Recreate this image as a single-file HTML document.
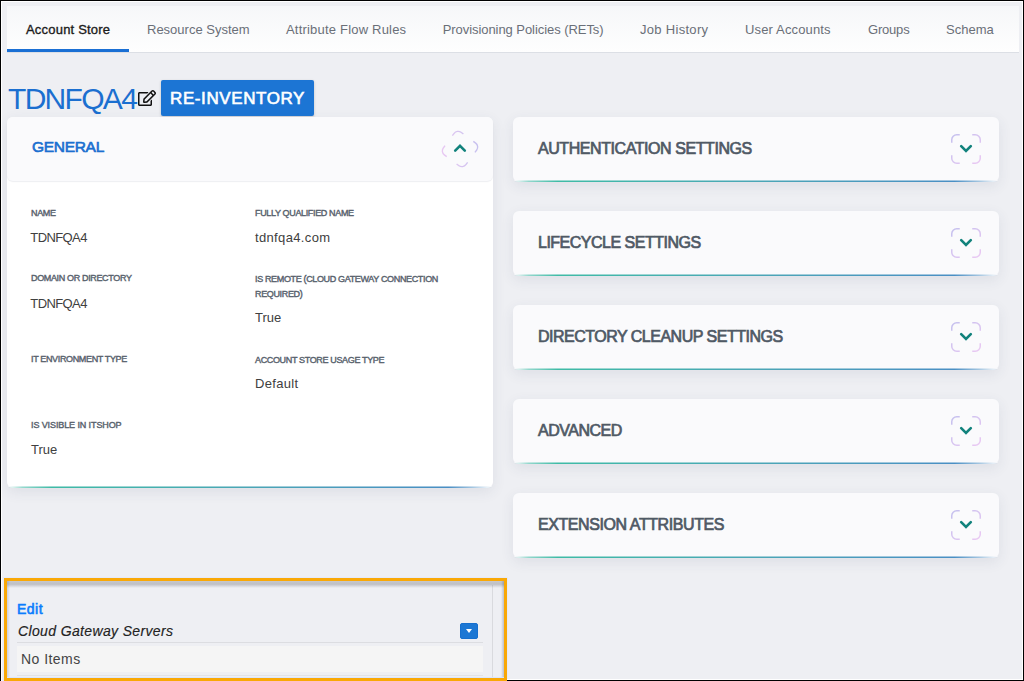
<!DOCTYPE html>
<html lang="en">
<head>
<meta charset="utf-8">
<title>Account Store - TDNFQA4</title>
<style>
*{box-sizing:border-box;margin:0;padding:0}
html,body{width:1024px;height:681px;overflow:hidden}
body{background:#eeeff3;font-family:"Liberation Sans",Arial,sans-serif;color:#333;position:relative}
.abs{position:absolute}
.t{position:absolute;white-space:nowrap;line-height:1}
/* outer screenshot frame */
#frame-l{left:0;top:0;width:1px;height:681px;background:#000}
#frame-t{left:0;top:0;width:1024px;height:1px;background:#000}
#frame-r{left:1023px;top:0;width:1px;height:681px;background:#000}
#frame-wr{left:1022px;top:1px;width:1px;height:679px;background:#fff}
#frame-wb{left:507px;top:679px;width:516px;height:1px;background:#fff}
#frame-b{left:507px;top:680px;width:517px;height:1px;background:#000}
#frame-wl{left:1px;top:1px;width:1px;height:680px;background:#fff}
#frame-wt{left:1px;top:1px;width:1022px;height:1px;background:#fff}
/* tab bar */
#tabs{left:7px;top:6px;width:1012px;height:47px;background:linear-gradient(#f6f7f9,#fefefe);border-bottom:1px solid #dcdfe5}
#tabs .tab{position:absolute;top:0;height:46px;font-size:13px;line-height:48px;color:#6a6f78;white-space:nowrap}
#tabs .tab.act{color:#1c1c1c;-webkit-text-stroke:0.35px #1c1c1c}
#tab-ul{left:7px;top:49px;width:122px;height:3px;background:#1a6fd4}
/* title */
#title{left:8px;top:84px;font-size:30px;color:#1b6fd0;letter-spacing:-1.7px}
#btn{left:161px;top:80px;width:153px;height:36px;background:#1c75d4;border-radius:2px;box-shadow:0 1px 3px rgba(0,0,0,.18)}
#btn span{left:9px;top:10px;font-size:17px;letter-spacing:0.600px;color:#fff;-webkit-text-stroke:0.6px #fff}
/* cards */
.card{position:absolute;background:#fafafc;border-radius:6px;box-shadow:0 4px 14px rgba(60,70,100,.09)}
.card .grad{position:absolute;left:1px;right:1px;bottom:0;height:2px;background:linear-gradient(90deg,rgba(63,187,166,0) 0,rgba(63,187,166,.55) 3%,#3fbba6 9%,#4ba6b6 50%,#4a8fc4 91%,rgba(74,143,196,.5) 96%,rgba(74,143,196,0) 100%)}
.card .grad:before{content:"";position:absolute;left:0;right:0;top:0;height:1px;background:rgba(250,250,252,.5)}
.card h2{position:absolute;left:25px;top:24px;font-size:16px;line-height:1;font-weight:normal;color:#4f5965;white-space:nowrap;letter-spacing:-0.5px;-webkit-text-stroke:0.7px #4f5965}
#gen h2{font-size:15.500px;letter-spacing:-0.3px;top:22px;color:#1b6fd0;-webkit-text-stroke:0.65px #1b6fd0}
#gen{background:#fff}
#gen-head{left:0;top:0;width:486px;height:63.500px;background:#fafafc;border-radius:6px;box-shadow:0 1px 1px rgba(60,70,100,.09)}
#gen-body{left:0;top:64px;width:486px;height:306px}
.lbl{position:absolute;white-space:nowrap;font-size:9px;line-height:15px;color:#58626d;-webkit-text-stroke:0.4px #58626d;letter-spacing:-0.35px}
.val{position:absolute;white-space:nowrap;font-size:13px;line-height:1;color:#404040}
.ico{position:absolute;right:18px;top:17px;width:30px;height:30px}
/* bottom highlighted box */
#hl{left:4px;top:578px;width:503px;height:103px;border:3px solid #f9a806;box-shadow:0 0 0 1px rgba(225,232,250,.75)}
#hl-sh{left:7px;top:581px;width:497px;height:7px;background:linear-gradient(rgba(40,42,50,.20) 0,rgba(40,42,50,.24) 45%,rgba(40,42,50,.10) 75%,rgba(40,42,50,0) 100%)}
#hl-shl{left:7px;top:581px;width:3px;height:97px;background:linear-gradient(90deg,rgba(80,100,150,.22),rgba(80,90,120,0))}
#hl-shr{left:501px;top:581px;width:3px;height:97px;background:linear-gradient(270deg,rgba(60,70,100,.28),rgba(60,70,100,0))}
#hl-shb{left:7px;top:677px;width:497px;height:1px;background:rgba(215,228,255,.9)}
#vline{left:492px;top:585px;width:1px;height:93px;background:#d9dade}
#edit{left:17px;top:602px;font-size:14px;letter-spacing:0.5px;color:#0b7dfd;-webkit-text-stroke:0.6px #0b7dfd}
#cgs{left:18px;top:624px;font-size:14px;letter-spacing:0.36px;font-style:italic;color:#222;-webkit-text-stroke:0.15px #222}
#hline1{left:17px;top:642px;width:466px;height:1px;background:#dcdde1}
#row{left:17px;top:646px;width:466px;height:26px;background:#f5f5f5}
#noitems{left:21px;top:652px;font-size:14px;letter-spacing:0.45px;color:#444}
#hline2{left:17px;top:675px;width:466px;height:1px;background:#e2e3e6}
#dd{left:460px;top:623px;width:18px;height:16px;background:#1c77d4;border:1px solid #166fce;border-radius:2px}
#dd:after{content:"";position:absolute;left:4.900px;top:5px;border-left:3.600px solid transparent;border-right:3.600px solid transparent;border-top:4.200px solid #fff}
</style>
</head>
<body>
<!-- tab bar -->
<div class="abs" id="tabs">
  <div class="tab act" style="left:19px;letter-spacing:0.2px">Account Store</div>
  <div class="tab" style="left:140px">Resource System</div>
  <div class="tab" style="left:279px;letter-spacing:0.2px">Attribute Flow Rules</div>
  <div class="tab" style="left:435.700px;letter-spacing:-0.06px">Provisioning Policies (RETs)</div>
  <div class="tab" style="left:633px;letter-spacing:0.3px">Job History</div>
  <div class="tab" style="left:738px;letter-spacing:0.15px">User Accounts</div>
  <div class="tab" style="left:861px;letter-spacing:-0.2px">Groups</div>
  <div class="tab" style="left:939px">Schema</div>
</div>
<div class="abs" id="tab-ul"></div>

<!-- title row -->
<div class="t" id="title">TDNFQA4</div>
<svg class="abs" id="editico" style="left:138px;top:90px" width="18" height="16" viewBox="0 0 576 512"><path fill="#111" d="M402.3 344.9l32-32c5-5 13.700-1.500 13.700 5.700V464c0 26.500-21.500 48-48 48H48c-26.500 0-48-21.500-48-48V112c0-26.500 21.500-48 48-48h273.500c7.100 0 10.700 8.600 5.700 13.700l-32 32c-1.500 1.500-3.500 2.300-5.700 2.300H48v352h352V350.500c0-2.100.8-4.100 2.300-5.600zm156.600-201.800L296.300 405.700l-90.400 10c-26.200 2.900-48.500-19.200-45.600-45.600l10-90.400L432.900 17.100c22.900-22.900 59.900-22.900 82.700 0l43.200 43.200c22.900 22.900 22.900 60 .1 82.800zM460.100 174L402 115.900 216.200 301.800l-7.300 65.300 65.300-7.300L460.100 174zm64.800-79.700l-43.200-43.200c-4.100-4.100-10.800-4.100-14.800 0L436 82l58.100 58.100 30.900-30.900c4-4.200 4-10.800-.1-14.900z"/></svg>
<div class="abs" id="btn"><span class="t">RE-INVENTORY</span></div>

<!-- General card -->
<div class="card" id="gen" style="left:7px;top:117px;width:486px;height:371px">
  <div class="abs" id="gen-head"></div>
  <h2>GENERAL</h2>
  <svg class="abs" viewBox="0 0 44 44" style="left:430.900px;top:9.700px;width:44px;height:44px" width="44" height="44"><defs><linearGradient id="lg0" gradientUnits="userSpaceOnUse" x1="0" y1="30" x2="30" y2="0"><stop offset="0" stop-color="#ebc9f3"/><stop offset="1" stop-color="#c4c0ee"/></linearGradient></defs><g transform="translate(22 22) rotate(36.500) scale(0.985) translate(-15 -15)" fill="none" stroke="url(#lg0)" stroke-width="1.400"><path d="M0.750 8.750 v-3 a5 5 0 0 1 5 -5 h3"/><path d="M21.250 0.750 h3 a5 5 0 0 1 5 5 v3"/><path d="M29.250 21.250 v3 a5 5 0 0 1 -5 5 h-3"/><path d="M8.750 29.250 h-3 a5 5 0 0 1 -5 -5 v-3"/></g><path d="M17.200 23.600 L22 18.800 L26.800 23.600" fill="none" stroke="#11827c" stroke-width="2.600" stroke-linecap="round" stroke-linejoin="miter"/></svg>
  <div class="abs" id="gen-body">
    <div class="lbl" style="left:24px;top:25px">NAME</div>
    <div class="val" style="left:23.300px;top:50px;letter-spacing:-0.6px">TDNFQA4</div>
    <div class="lbl" style="left:248px;top:25px">FULLY QUALIFIED NAME</div>
    <div class="val" style="left:248px;top:50px;letter-spacing:0.35px">tdnfqa4.com</div>

    <div class="lbl" style="left:24px;top:90px">DOMAIN OR DIRECTORY</div>
    <div class="val" style="left:23.300px;top:116px;letter-spacing:-0.6px">TDNFQA4</div>
    <div class="lbl" style="left:248px;top:91px">IS REMOTE (CLOUD GATEWAY CONNECTION<br>REQUIRED)</div>
    <div class="val" style="left:248px;top:130px">True</div>

    <div class="lbl" style="left:24px;top:171px">IT ENVIRONMENT TYPE</div>
    <div class="lbl" style="left:248px;top:172px">ACCOUNT STORE USAGE TYPE</div>
    <div class="val" style="left:248px;top:196px;letter-spacing:0.3px">Default</div>

    <div class="lbl" style="left:24px;top:237px;letter-spacing:-0.1px">IS VISIBLE IN ITSHOP</div>
    <div class="val" style="left:24px;top:262px">True</div>
  </div>
  <div class="grad"></div>
</div>

<!-- Right column cards -->
<div class="card rc" style="left:513px;top:117px;width:486px;height:65px"><h2 style="letter-spacing:-0.43px">AUTHENTICATION SETTINGS</h2><svg class="ico" viewBox="0 0 30 30"><defs><linearGradient id="lg1" gradientUnits="userSpaceOnUse" x1="0" y1="0" x2="30" y2="30"><stop offset="0" stop-color="#c4c0ee"/><stop offset="1" stop-color="#ebc9f3"/></linearGradient></defs><g fill="none" stroke="url(#lg1)" stroke-width="1.500"><path d="M0.750 8.750 v-3 a5 5 0 0 1 5 -5 h3"/><path d="M21.250 0.750 h3 a5 5 0 0 1 5 5 v3"/><path d="M29.250 21.250 v3 a5 5 0 0 1 -5 5 h-3"/><path d="M8.750 29.250 h-3 a5 5 0 0 1 -5 -5 v-3"/></g><path d="M10.200 12.200 L15 17 L19.800 12.200" fill="none" stroke="#11827c" stroke-width="2.600" stroke-linecap="round" stroke-linejoin="miter"/></svg><div class="grad"></div></div>
<div class="card rc" style="left:513px;top:211px;width:486px;height:65px"><h2>LIFECYCLE SETTINGS</h2><svg class="ico" viewBox="0 0 30 30"><defs><linearGradient id="lg2" gradientUnits="userSpaceOnUse" x1="0" y1="0" x2="30" y2="30"><stop offset="0" stop-color="#c4c0ee"/><stop offset="1" stop-color="#ebc9f3"/></linearGradient></defs><g fill="none" stroke="url(#lg2)" stroke-width="1.500"><path d="M0.750 8.750 v-3 a5 5 0 0 1 5 -5 h3"/><path d="M21.250 0.750 h3 a5 5 0 0 1 5 5 v3"/><path d="M29.250 21.250 v3 a5 5 0 0 1 -5 5 h-3"/><path d="M8.750 29.250 h-3 a5 5 0 0 1 -5 -5 v-3"/></g><path d="M10.200 12.200 L15 17 L19.800 12.200" fill="none" stroke="#11827c" stroke-width="2.600" stroke-linecap="round" stroke-linejoin="miter"/></svg><div class="grad"></div></div>
<div class="card rc" style="left:513px;top:305px;width:486px;height:65px"><h2>DIRECTORY CLEANUP SETTINGS</h2><svg class="ico" viewBox="0 0 30 30"><defs><linearGradient id="lg3" gradientUnits="userSpaceOnUse" x1="0" y1="0" x2="30" y2="30"><stop offset="0" stop-color="#c4c0ee"/><stop offset="1" stop-color="#ebc9f3"/></linearGradient></defs><g fill="none" stroke="url(#lg3)" stroke-width="1.500"><path d="M0.750 8.750 v-3 a5 5 0 0 1 5 -5 h3"/><path d="M21.250 0.750 h3 a5 5 0 0 1 5 5 v3"/><path d="M29.250 21.250 v3 a5 5 0 0 1 -5 5 h-3"/><path d="M8.750 29.250 h-3 a5 5 0 0 1 -5 -5 v-3"/></g><path d="M10.200 12.200 L15 17 L19.800 12.200" fill="none" stroke="#11827c" stroke-width="2.600" stroke-linecap="round" stroke-linejoin="miter"/></svg><div class="grad"></div></div>
<div class="card rc" style="left:513px;top:399px;width:486px;height:65px"><h2>ADVANCED</h2><svg class="ico" viewBox="0 0 30 30"><defs><linearGradient id="lg4" gradientUnits="userSpaceOnUse" x1="0" y1="0" x2="30" y2="30"><stop offset="0" stop-color="#c4c0ee"/><stop offset="1" stop-color="#ebc9f3"/></linearGradient></defs><g fill="none" stroke="url(#lg4)" stroke-width="1.500"><path d="M0.750 8.750 v-3 a5 5 0 0 1 5 -5 h3"/><path d="M21.250 0.750 h3 a5 5 0 0 1 5 5 v3"/><path d="M29.250 21.250 v3 a5 5 0 0 1 -5 5 h-3"/><path d="M8.750 29.250 h-3 a5 5 0 0 1 -5 -5 v-3"/></g><path d="M10.200 12.200 L15 17 L19.800 12.200" fill="none" stroke="#11827c" stroke-width="2.600" stroke-linecap="round" stroke-linejoin="miter"/></svg><div class="grad"></div></div>
<div class="card rc" style="left:513px;top:493px;width:486px;height:65px"><h2 style="letter-spacing:-0.42px">EXTENSION ATTRIBUTES</h2><svg class="ico" viewBox="0 0 30 30"><defs><linearGradient id="lg5" gradientUnits="userSpaceOnUse" x1="0" y1="0" x2="30" y2="30"><stop offset="0" stop-color="#c4c0ee"/><stop offset="1" stop-color="#ebc9f3"/></linearGradient></defs><g fill="none" stroke="url(#lg5)" stroke-width="1.500"><path d="M0.750 8.750 v-3 a5 5 0 0 1 5 -5 h3"/><path d="M21.250 0.750 h3 a5 5 0 0 1 5 5 v3"/><path d="M29.250 21.250 v3 a5 5 0 0 1 -5 5 h-3"/><path d="M8.750 29.250 h-3 a5 5 0 0 1 -5 -5 v-3"/></g><path d="M10.200 12.200 L15 17 L19.800 12.200" fill="none" stroke="#11827c" stroke-width="2.600" stroke-linecap="round" stroke-linejoin="miter"/></svg><div class="grad"></div></div>


<!-- bottom highlighted region -->
<div class="abs" id="vline"></div>
<div class="t" id="edit">Edit</div>
<div class="t" id="cgs">Cloud Gateway Servers</div>
<div class="abs" id="dd"></div>
<div class="abs" id="hline1"></div>
<div class="abs" id="row"></div>
<div class="t" id="noitems">No Items</div>
<div class="abs" id="hline2"></div>
<div class="abs" id="hl-sh"></div><div class="abs" id="hl-shl"></div><div class="abs" id="hl-shr"></div><div class="abs" id="hl-shb"></div><div class="abs" id="hl"></div>

<!-- frame -->
<div class="abs" id="frame-wl"></div><div class="abs" id="frame-wr"></div><div class="abs" id="frame-wb"></div><div class="abs" id="frame-wt"></div>
<div class="abs" id="frame-l"></div><div class="abs" id="frame-t"></div><div class="abs" id="frame-r"></div><div class="abs" id="frame-b"></div>
</body>
</html>
